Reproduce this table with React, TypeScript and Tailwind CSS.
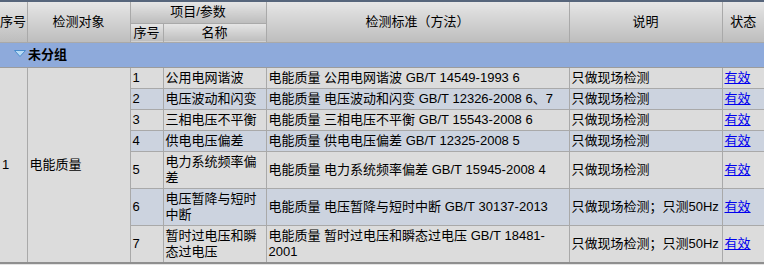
import React from 'react';

interface CheckItem {
    no: number;
    name: string;
    standard: string;
    note: string;
}

const items: CheckItem[] = [
    { no: 1, name: '公用电网谐波', standard: '电能质量 公用电网谐波 GB/T 14549-1993 6', note: '只做现场检测' },
    { no: 2, name: '电压波动和闪变', standard: '电能质量 电压波动和闪变 GB/T 12326-2008 6、7', note: '只做现场检测' },
    { no: 3, name: '三相电压不平衡', standard: '电能质量 三相电压不平衡 GB/T 15543-2008 6', note: '只做现场检测' },
    { no: 4, name: '供电电压偏差', standard: '电能质量 供电电压偏差 GB/T 12325-2008 5', note: '只做现场检测' },
    { no: 5, name: '电力系统频率偏差', standard: '电能质量 电力系统频率偏差 GB/T 15945-2008 4', note: '只做现场检测' },
    { no: 6, name: '电压暂降与短时中断', standard: '电能质量 电压暂降与短时中断 GB/T 30137-2013', note: '只做现场检测；只测50Hz' },
    { no: 7, name: '暂时过电压和瞬态过电压', standard: '电能质量 暂时过电压和瞬态过电压 GB/T 18481-2001', note: '只做现场检测；只测50Hz' },
];

const th = 'border border-[#a9a9a9] bg-linear-to-b from-[#e6e6e6] to-[#bdbdbd] font-normal text-center px-[2px] whitespace-nowrap';
const td = 'border border-[#a9a9a9] px-[2px] py-[2px] text-left align-middle';

function GroupArrow() {
    return (
        <svg width="12" height="7" viewBox="0 0 12 7" className="inline-block mr-[2px] align-[2px]">
            <path d="M0.5 0.5 H11.5 L6 6.5 Z" fill="#b8dbf4" stroke="#4a8ccc" strokeWidth="1" />
        </svg>
    );
}

export default function App() {
    return (
        <div
            className="min-h-screen w-[764px] bg-[#e4e4e4] text-black"
            style={{ fontFamily: '"Liberation Sans", Arial, "Noto Sans CJK SC", sans-serif' }}
        >
            <div className="border-t-2 border-[#56657b]">
                <table className="w-[764px] table-fixed border-collapse text-[13px] leading-[16px]">
                    <colgroup>
                        <col className="w-[27px]" />
                        <col className="w-[103px]" />
                        <col className="w-[33px]" />
                        <col className="w-[103px]" />
                        <col className="w-[303px]" />
                        <col className="w-[153px]" />
                        <col className="w-[42px]" />
                    </colgroup>
                    <thead>
                        <tr className="h-[21px]">
                            <th rowSpan={2} className={th + ' border-t-0 border-l-0 !px-0 !text-left'}>序号</th>
                            <th rowSpan={2} className={th + ' border-t-0'}>检测对象</th>
                            <th colSpan={2} className={th + ' border-t-0'}>项目/参数</th>
                            <th rowSpan={2} className={th + ' border-t-0'}>检测标准（方法）</th>
                            <th rowSpan={2} className={th + ' border-t-0'}>说明</th>
                            <th rowSpan={2} className={th + ' border-t-0 border-r-0'}>状态</th>
                        </tr>
                        <tr className="h-[19px]">
                            <th className={th}>序号</th>
                            <th className={th}>名称</th>
                        </tr>
                    </thead>
                    <tbody>
                        {/* group header */}
                        <tr className="h-[25px]">
                            <td colSpan={7} className="bg-[#8eaadb] border-b border-[#9c9c9c] pl-[14px] font-bold">
                                <GroupArrow />
                                未分组
                            </td>
                        </tr>
                        {items.map((item, i) => {
                            const rowBg = i % 2 === 1 ? 'bg-[#ccd3df]' : 'bg-[#dcdcdc]';
                            return (
                                <tr key={item.no} className={rowBg}>
                                    {i === 0 && (
                                        <>
                                            <td rowSpan={items.length} className={td + ' bg-[#dcdcdc] border-l-0'}>1</td>
                                            <td rowSpan={items.length} className={td + ' bg-[#dcdcdc]'}>电能质量</td>
                                        </>
                                    )}
                                    <td className={td}>{item.no}</td>
                                    <td className={td + ' break-all'}>{item.name}</td>
                                    <td className={td}>{item.standard}</td>
                                    <td className={td + ' whitespace-nowrap'}>{item.note}</td>
                                    <td className={td + ' border-r-0'}>
                                        <a href="#" className="text-[#0000ee] underline">有效</a>
                                    </td>
                                </tr>
                            );
                        })}
                    </tbody>
                </table>
            </div>
            <div className="h-[2px] bg-[#8f8f8f] w-[764px] -mt-px" />
        </div>
    );
}
